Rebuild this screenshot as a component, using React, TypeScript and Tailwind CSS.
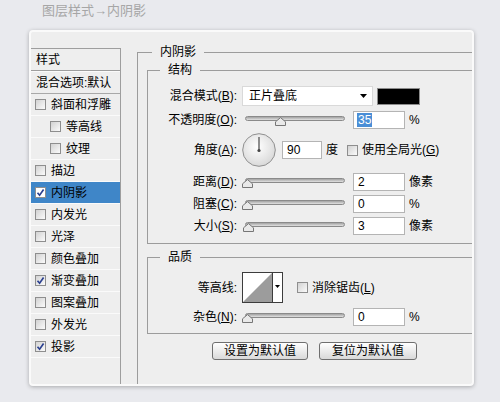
import React from 'react';

const items = [
  { t: '斜面和浮雕' },
  { t: '等高线', sub: true },
  { t: '纹理', sub: true },
  { t: '描边' },
  { t: '内阴影', on: true, sel: true },
  { t: '内发光' },
  { t: '光泽' },
  { t: '颜色叠加' },
  { t: '渐变叠加', on: true },
  { t: '图案叠加' },
  { t: '外发光' },
  { t: '投影', on: true },
];

function Check({ on = false, white = false }: { on?: boolean; white?: boolean }) {
  return (
    <span
      className={`flex h-[11px] w-[11px] shrink-0 items-center justify-center border border-[#8e8e8e] ${
        white ? 'bg-white' : 'bg-linear-to-br from-[#d2d2d2] to-[#fbfbfb]'
      }`}
    >
      {on && (
        <svg width="9" height="9" viewBox="0 0 9 9">
          <path d="M1.5 4.8 L3.6 7.2 L7.6 1.6" fill="none" stroke="#2c4190" strokeWidth="1.7" />
        </svg>
      )}
    </span>
  );
}

function Lbl({ t, k }: { t: string; k?: string }) {
  return (
    <span className="w-[89px] shrink-0 text-right">
      {t}
      {k && (
        <>
          (<span className="underline underline-offset-[1px]">{k}</span>)
        </>
      )}
      :
    </span>
  );
}

function Slider({ pos }: { pos: string }) {
  return (
    <div className="relative ml-[5px] h-[18px] w-[103px] shrink-0">
      <div className="absolute left-[3px] right-0 top-[5px] h-[5px] rounded-full border border-[#8a8a8a] bg-linear-to-b from-[#a2a2a2] to-[#e2e2e2]" />
      <svg className={`absolute top-[6px] ${pos}`} width="11" height="9" viewBox="0 0 11 9">
        <path d="M5.5 0.6 L10.5 4.8 V8.5 H0.5 V4.8 Z" fill="#e9e9e9" stroke="#767676" />
      </svg>
    </div>
  );
}

function Num({ v, w = 'w-[52px]', sel = false }: { v: string; w?: string; sel?: boolean }) {
  return (
    <div className={`flex h-[18px] ${w} shrink-0 items-center border border-[#b4b4b4] bg-white pl-[3px] font-['Liberation_Sans',sans-serif]`}>
      {sel ? <span className="bg-[#4a8ed6] px-[1px] leading-[14px] text-white">{v}</span> : <span className="pl-[1px]">{v}</span>}
    </div>
  );
}

function SliderRow({ t, k, pos, v, unit, sel, mt }: { t: string; k: string; pos: string; v: string; unit: string; sel?: boolean; mt: string }) {
  return (
    <div className={`flex h-[18px] items-center ${mt}`}>
      <Lbl t={t} k={k} />
      <Slider pos={pos} />
      <div className="ml-[8px]">
        <Num v={v} sel={sel} />
      </div>
      <span className="ml-[4px]">{unit}</span>
    </div>
  );
}

export default function App() {
  return (
    <div className="h-[402px] w-[500px] overflow-hidden bg-[#e9eaee] font-['Liberation_Sans','Noto_Sans_CJK_SC',sans-serif] text-[12px] leading-[16px] text-black">
      <div className="h-[30px] pl-[42px] pt-[3px] text-[13px] text-[#a6a6a6]">图层样式→内阴影</div>

      <div className="ml-[29px] flex h-[356px] w-[445px] overflow-hidden rounded-[4px] border-2 border-[#fafafa] bg-[#eeeeee] shadow-[0_1px_4px_rgba(0,0,0,0.28)]">
        {/* style list */}
        <div className="mt-[16px] w-[90px] shrink-0 border-r border-t border-[#9e9e9e]">
          <div className="flex h-[22px] items-center border-b border-[#9e9e9e] pl-[5px]">样式</div>
          <div className="flex h-[23px] items-center border-b border-t border-b-[#a8a8a8] border-t-[#fafafa] pl-[5px]">混合选项:默认</div>
          {items.map((it) => (
            <div
              key={it.t}
              className={`flex h-[22px] items-center gap-[5px] border-b border-[#fafafa] ${it.sub ? 'pl-[19px]' : 'pl-[4px]'} ${
                it.sel ? 'bg-[#3f86c8]' : ''
              }`}
            >
              <Check on={it.on} white={it.sel} />
              <span>{it.t}</span>
            </div>
          ))}
        </div>

        {/* 内阴影 */}
        <fieldset className="ml-[16px] mt-[12px] min-w-0 flex-1 border-l border-t border-[#9c9c9c]">
          <legend className="ml-[14px] px-[8px] leading-[16px]">内阴影</legend>

          <fieldset className="ml-[9px] mt-[2px] border-y border-l border-[#9c9c9c] pb-[8px]">
            <legend className="ml-[12px] px-[8px] leading-[16px]">结构</legend>

            <div className="mt-[8px] flex h-[20px] items-center">
              <Lbl t="混合模式" k="B" />
              <div className="ml-[5px] flex h-[20px] w-[131px] items-center justify-between border border-[#d9d9d9] bg-white pl-[6px] pr-[5px]">
                <span>正片叠底</span>
                <svg width="7" height="4" viewBox="0 0 7 4">
                  <path d="M0 0 H7 L3.5 4 Z" fill="#000" />
                </svg>
              </div>
              <div className="ml-[4px] h-[17px] w-[43px] border border-[#8c8c8c] bg-black" />
            </div>

            <SliderRow mt="mt-[5px]" t="不透明度" k="O" pos="left-[33px]" v="35" unit="%" sel />

            <div className="mt-[4px] flex h-[34px] items-center">
              <Lbl t="角度" k="A" />
              <svg className="ml-[5px] shrink-0" width="34" height="34" viewBox="0 0 34 34">
                <defs>
                  <radialGradient id="dial" cx="45%" cy="40%" r="65%">
                    <stop offset="0%" stopColor="#ffffff" />
                    <stop offset="100%" stopColor="#d6d6d6" />
                  </radialGradient>
                </defs>
                <circle cx="17" cy="17" r="16.3" fill="url(#dial)" stroke="#8f8f8f" />
                <line x1="17" y1="17" x2="17" y2="4" stroke="#555" strokeWidth="1.3" />
                <circle cx="17" cy="17.5" r="1.6" fill="#444" />
              </svg>
              <div className="ml-[6px]">
                <Num v="90" w="w-[40px]" />
              </div>
              <span className="ml-[4px]">度</span>
              <span className="ml-[9px]">
                <Check />
              </span>
              <span className="ml-[4px]">
                使用全局光(<span className="underline underline-offset-[1px]">G</span>)
              </span>
            </div>

            <SliderRow mt="mt-[6px]" t="距离" k="D" pos="left-[0px]" v="2" unit="像素" />
            <SliderRow mt="mt-[4px]" t="阻塞" k="C" pos="left-[0px]" v="0" unit="%" />
            <SliderRow mt="mt-[4px]" t="大小" k="S" pos="left-[1px]" v="3" unit="像素" />
          </fieldset>

          <fieldset className="ml-[9px] mt-[5px] border-y border-l border-[#9c9c9c] pb-[7px]">
            <legend className="ml-[12px] px-[8px] leading-[16px]">品质</legend>

            <div className="mt-[7px] flex h-[31px] items-center">
              <Lbl t="等高线" />
              <svg className="ml-[5px] shrink-0" width="41" height="31" viewBox="0 0 41 31">
                <rect x="0.5" y="0.5" width="40" height="30" fill="#fff" stroke="#3c3c3c" />
                <path d="M1 30 L30 1 V30 Z" fill="#9c9c9c" />
                <line x1="30.5" y1="1" x2="30.5" y2="30" stroke="#3c3c3c" />
                <path d="M33 13 H38 L35.5 16 Z" fill="#000" />
              </svg>
              <span className="ml-[14px]">
                <Check />
              </span>
              <span className="ml-[4px]">
                消除锯齿(<span className="underline underline-offset-[1px]">L</span>)
              </span>
            </div>

            <SliderRow mt="mt-[5px]" t="杂色" k="N" pos="left-[0px]" v="0" unit="%" />
          </fieldset>

          <div className="ml-[74px] mt-[8px] flex gap-[11px]">
            <button className="h-[18px] w-[96px] rounded-[3px] border border-[#6f6f6f] bg-linear-to-b from-white to-[#d9d9d9] leading-[16px]">
              设置为默认值
            </button>
            <button className="h-[18px] w-[98px] rounded-[3px] border border-[#6f6f6f] bg-linear-to-b from-white to-[#d9d9d9] leading-[16px]">
              复位为默认值
            </button>
          </div>
        </fieldset>
      </div>
    </div>
  );
}
